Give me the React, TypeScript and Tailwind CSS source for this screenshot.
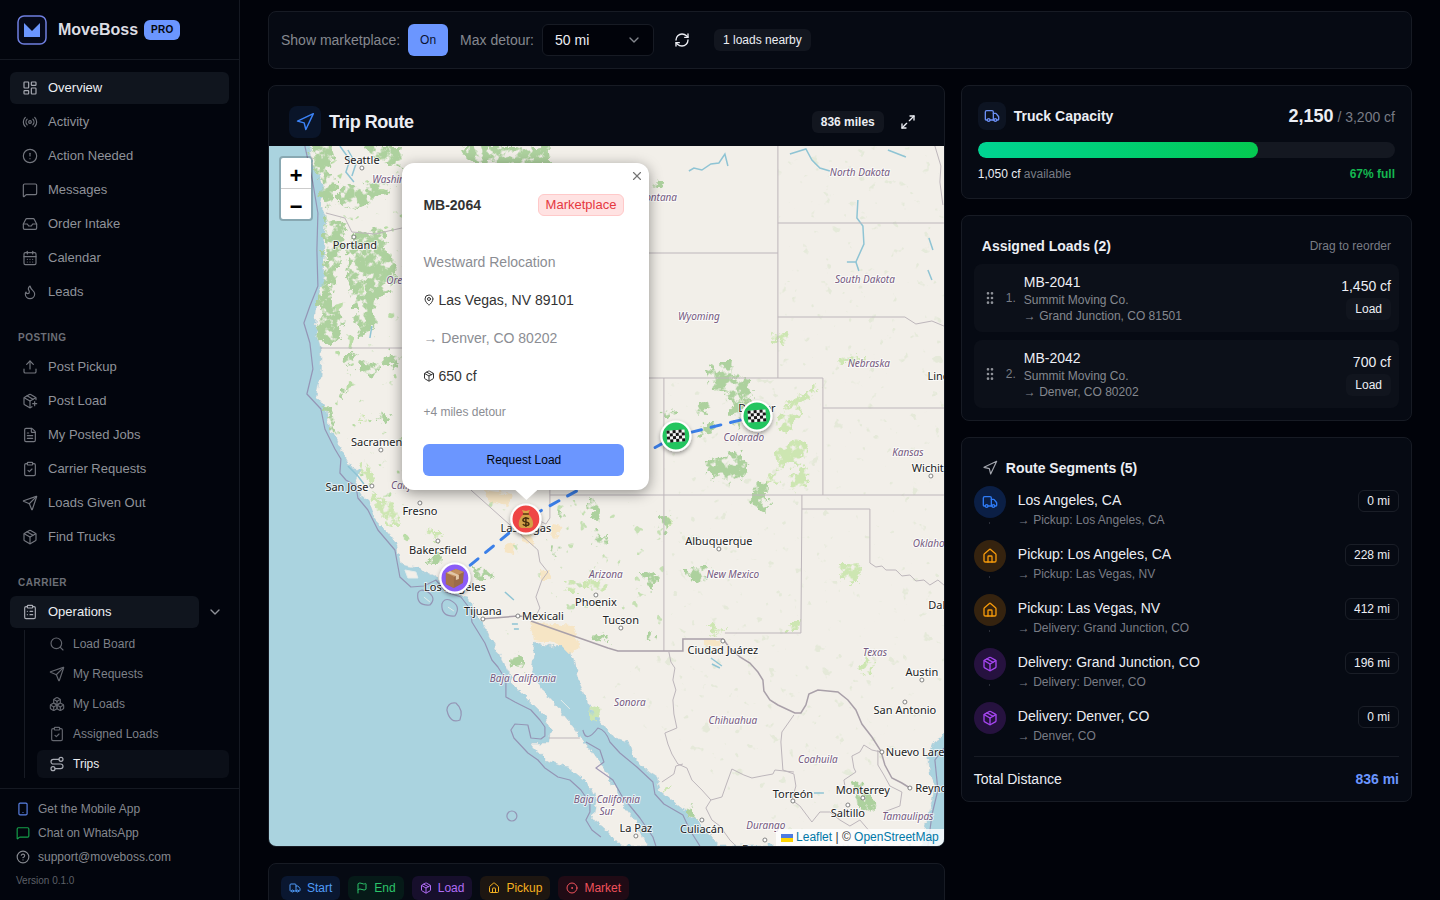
import React, { useState } from 'react';
import {
  LayoutDashboard, Radio, CircleAlert, MessageSquare, Inbox, CalendarDays, Flame, Upload, PackagePlus,
  FileText, ClipboardCheck, Send, Package, ClipboardList, ChevronDown, Search, Boxes, Route, Smartphone,
  CircleHelp, RefreshCw, Navigation, Maximize2, Truck, GripVertical, House, Flag, CircleDot, MapPin, X,
} from 'lucide-react';

const MAIN_LINKS = [
  { label: 'Overview', icon: LayoutDashboard, active: true },
  { label: 'Activity', icon: Radio },
  { label: 'Action Needed', icon: CircleAlert },
  { label: 'Messages', icon: MessageSquare },
  { label: 'Order Intake', icon: Inbox },
  { label: 'Calendar', icon: CalendarDays },
  { label: 'Leads', icon: Flame },
];

const POSTING_LINKS = [
  { label: 'Post Pickup', icon: Upload },
  { label: 'Post Load', icon: PackagePlus },
  { label: 'My Posted Jobs', icon: FileText },
  { label: 'Carrier Requests', icon: ClipboardCheck },
  { label: 'Loads Given Out', icon: Send },
  { label: 'Find Trucks', icon: Package },
];

const OPERATIONS_LINKS = [
  { label: 'Load Board', icon: Search },
  { label: 'My Requests', icon: Send },
  { label: 'My Loads', icon: Boxes },
  { label: 'Assigned Loads', icon: ClipboardCheck },
  { label: 'Trips', icon: Route, active: true },
];

const LOADS = [
  { id: 'MB-2041', company: 'Summit Moving Co.', to: 'Grand Junction, CO 81501', volume: '1,450 cf' },
  { id: 'MB-2042', company: 'Summit Moving Co.', to: 'Denver, CO 80202', volume: '700 cf' },
];

const SEGMENTS = [
  { from: 'Los Angeles, CA', to: 'Pickup: Los Angeles, CA', miles: 0, icon: Truck, style: 'bg-[#0b1f45] text-[#2f7bf5]' },
  { from: 'Pickup: Los Angeles, CA', to: 'Pickup: Las Vegas, NV', miles: 228, icon: House, style: 'bg-[#35230f] text-[#f59a0b]' },
  { from: 'Pickup: Las Vegas, NV', to: 'Delivery: Grand Junction, CO', miles: 412, icon: House, style: 'bg-[#35230f] text-[#f59a0b]' },
  { from: 'Delivery: Grand Junction, CO', to: 'Delivery: Denver, CO', miles: 196, icon: Package, style: 'bg-[#26123f] text-[#a546f0]' },
  { from: 'Delivery: Denver, CO', to: 'Denver, CO', miles: 0, icon: Package, style: 'bg-[#26123f] text-[#a546f0]' },
];

const LEGEND = [
  { label: 'Start', icon: Truck, style: 'bg-[#0a1730] text-[#4f9bf8]' },
  { label: 'End', icon: Flag, style: 'bg-[#061a18] text-[#2cc46a]' },
  { label: 'Load', icon: Package, style: 'bg-[#170f2c] text-[#b06cf5]' },
  { label: 'Pickup', icon: House, style: 'bg-[#1d1611] text-[#f5b01f]' },
  { label: 'Market', icon: CircleDot, style: 'bg-[#200b15] text-[#f0525c]' },
];

const CARD = 'rounded-lg border border-[#171b24] bg-[#060a13]';

// map labels: [text, x, y]
const CITIES: [string, number, number][] = [
  ['Seattle', 362, 160], ['Portland', 355, 245], ['Sacramento', 382, 442], ['San Jose', 347, 487],
  ['Fresno', 420, 511], ['Bakersfield', 438, 550], ['Las Vegas', 526, 528], ['Los Angeles', 455, 587],
  ['Tijuana', 483, 611], ['Mexicali', 543, 616], ['Phoenix', 596, 602], ['Tucson', 621, 620],
  ['Albuquerque', 719, 541], ['Ciudad Juárez', 723, 650], ['Denver', 757, 408], ['Wichita', 931, 468],
  ['Lincoln', 946, 376], ['Dallas', 944, 605], ['Austin', 922, 672], ['San Antonio', 905, 710],
  ['Nuevo Laredo', 922, 752], ['Monterrey', 863, 790], ['Reynosa', 937, 788], ['Torreón', 793, 794],
  ['Saltillo', 848, 813], ['Culiacán', 702, 829], ['La Paz', 636, 828], ['Durango', 765, 849],
];

const STATES: [string, number, number][] = [
  ['Washington', 399, 179], ['Oregon', 403, 280], ['Montana', 657, 197], ['North Dakota', 860, 172],
  ['South Dakota', 865, 279], ['Wyoming', 699, 316], ['Nebraska', 869, 363], ['Kansas', 908, 452],
  ['Colorado', 744, 437], ['California', 413, 485], ['Arizona', 606, 574], ['New Mexico', 733, 574],
  ['Oklahoma', 936, 543], ['Texas', 875, 652], ['Baja California', 523, 678], ['Sonora', 630, 702],
  ['Chihuahua', 733, 720], ['Coahuila', 818, 759], ['Durango', 766, 825], ['Tamaulipas', 908, 816],
  ['Baja California', 607, 799], ['Sur', 607, 811],
];

const TOWNS = [
  [362, 168], [354, 237], [381, 450], [372, 486], [420, 503], [438, 541], [483, 619], [518, 616], [596, 595],
  [621, 628], [719, 549], [723, 641], [931, 476], [922, 680], [905, 702], [882, 752], [863, 798], [910, 788],
  [793, 801], [848, 805], [702, 820], [636, 836], [765, 840],
];

const WOODS = [
  'M309 146H330L334 158 326 170 336 178 334 200 326 212 319 180Z',
  'M340 184L360 186 378 180 392 186 390 196 372 198 356 210 340 206Z',
  'M370 146H402V168L384 164 366 152Z',
  'M324 216L346 226 340 262 330 300 343 318 338 345 319 342 318 298 326 262Z',
  'M352 232L386 230 386 252 398 262 394 290 376 300 374 330 358 336 354 300 346 280Z',
  'M346 354L354 354 350 366 346 364Z M362 360L378 366 374 376 360 372Z M386 350L398 356 396 368 384 364Z',
  'M322 404L330 408 340 434 332 432Z M380 410L390 416 388 424 380 420Z M340 388L346 390 344 398 338 396Z',
  'M705 368L718 372 722 362 733 362 732 376 750 380 752 404 734 416 726 394 708 386Z',
  'M696 406L708 402 710 412 696 416Z M704 424L712 424 710 434 700 438Z M704 462L742 450 748 474 738 482 712 476Z',
  'M664 412L674 410 672 418 664 418Z M736 414L742 420 738 428 732 424Z',
  'M752 482H768V512L754 508Z M660 516H670V534H660Z M688 568L708 568 704 582 688 580Z M640 572L656 572 656 590 646 588Z',
  'M588 496L598 502 600 522 590 515Z M594 534L610 536 608 546 592 546Z M560 508L566 510 564 524 558 520Z M554 544L558 546 556 558 552 554Z',
  'M646 630H654V640H646Z M596 634L606 636 604 642 594 640Z M604 638L610 638 608 644Z',
  'M474 568L496 570 494 578 474 576Z M428 556H442V564H428Z M512 652L520 656 524 672 514 664Z',
  'M460 146H550V164H470Z M651 183L662 180 660 188 651 188Z',
  'M854 778L866 786 878 810 868 812 856 800Z M688 804L694 812 694 820 688 816Z',
];

const MEADOWS = [
  'M372 496L384 498 398 512 402 526 392 526 378 512Z M430 532L444 532 440 540 430 540Z M362 462L374 476 370 482 360 470Z',
  'M774 333L788 334 786 346 774 344Z M838 358L866 357 864 364 838 364Z M786 404L818 384 820 388 800 406Z',
  'M837 562L860 562 860 582 844 582Z M858 672L866 652 874 664 870 674Z M787 624H800V632H787Z M708 626L722 626 720 636Z',
  'M588 708L600 704 598 720 588 720Z M566 580L576 580 576 592 568 592Z M582 580L606 578 602 590 586 588Z',
  'M778 414L796 402 804 410 792 430 778 428Z M776 452L796 436 808 448 800 464 778 468Z M766 478L778 472 780 482 768 486Z M788 476L810 466 808 486 790 490Z',
  'M660 516L672 518 670 532 662 534Z M360 410L366 420 362 424Z M662 784L672 784 664 792Z',
];

const SANDS = [
  'M530 622L574 626 580 648 570 654 560 644 534 640Z M504 544L516 542 514 554 504 552Z M484 490L512 494 508 506 490 502Z',
  'M540 568L552 570 550 580 542 580Z M552 524L562 526 556 540 550 534Z M705 640H720V646H705Z M520 532L532 534 534 546 524 542Z',
];

const LAND =
  'M310 146L313 166 320 176 323 189 321 204 326 218 324 246 325 279 318 296 315 326 320 346 321 359 320 379 316 396 326 409 330 429 341 449 350 466 360 471 355 483 363 496 368 500 375 520 387 532 396 543 401 565 418 568 435 576 448 592 468 597 478 617 488 633 498 653 505 667 515 687 528 700 545 717 551 730 548 744 530 744 545 760 568 767 588 783 596 800 593 820 608 832 620 846H648L643 837 635 820 620 800 610 777 605 770 593 753 581 737 568 720 558 707 545 693 532 672 535 642 551 647 561 645 573 657 578 680 588 702 600 720 613 737 628 742 632 753 643 767 658 777 660 790 680 807 697 820 710 833 717 846H922L926 823 932 803 935 783 929 772 928 757 934 742 950 733V140H309Z';

const STATE_LINES = [
  'M326 213L345 218 352 232 375 234 402 228', 'M320 348H402', 'M649 253H778', 'M778 146V378', 'M778 223H944',
  'M778 317H905L916 324 932 321 944 326', 'M649 378H823V495', 'M823 408H944', 'M664 378V651', 'M550 495H944',
  'M802 495V509H870V563L876 567 882 566 886 570 896 570 902 576 910 575 916 581 924 580 930 585 938 580 944 585',
  'M802 509L801 633H725', 'M471 490L538 550 540 562 548 572 542 580 536 597 540 608 536 616', 'M550 490V518L546 524 538 520', 'M549 738H580',
  'M669 652L671 662 675 668 673 680 676 690 673 700 674 714 677 728 665 733 668 744 672 754 678 764 687 768 692 780 702 790 711 800 706 808 712 820 720 826 730 840 736 846',
  'M794 715L782 732 781 742 783 770 794 774 796 786 792 800 800 806 812 822', 'M711 800L722 797 728 780 732 769 744 775 752 778 762 776 773 774 775 770 794 772',
  'M683 764L676 766 674 774 662 782', 'M881 752L872 750 864 745 860 752 852 756 854 768 856 772 844 780 846 792', 'M878 750L878 765 884 775 890 786 902 792 900 806 884 812',
  'M812 822L820 812 830 812 840 820 850 826 860 820 872 834', 'M935 146L941 166 940 182 943 205',
];

const SEA_LINES = [
  'M305 146L313 183 318 213 317 250 318 286 310 306 304 323 310 343 313 369 307 394 321 409 325 429 335 449 341 459 340 473 346 480 356 486 358 498 368 510 378 530 395 550 400 577 411 587 424 586 436 580 446 592 461 597 471 610 472 622 485 643 492 660 498 667 506 680 506 697 515 702 531 710 540 720 545 727 545 736 541 739 531 738 528 725 515 724 511 730 514 738 528 753 538 760 545 768 558 777 570 780 581 790 590 803 590 812 586 820 592 830 601 837',
  'M583 730Q586 744 598 728Q606 730 610 742L620 753 637 767 653 782 655 794 664 804 683 815 690 830 700 846',
  'M586 742L600 750 604 762 596 768 613 780 622 796 640 818 653 837 656 846',
  'M418 593Q416 606 430 605Q437 598 428 592Q420 588 418 593Z',
  'M442 604Q441 617 455 616Q462 606 450 600Q444 598 442 604Z',
  'M447 710Q448 702 456 703Q464 710 460 720Q450 724 447 710Z',
  'M507 816a5 5 0 1 0 10 0a5 5 0 1 0 -10 0Z',
  'M944 748L935 760 938 790 932 815 928 846',
];

const LAKES = [
  'M689 171L694 168 702 170 711 164 719 163 725 154 728 166', 'M790 154L806 149 812 160 820 168 830 171',
  'M858 200L857 218 863 226 864 244 856 262 859 271M847 262L857 262', 'M888 150L906 157',
  'M340 146L350 160 346 172 354 182', 'M348 150L356 164 352 176', 'M505 592L514 600', 'M348 466L358 476 364 484', 'M372 326L370 338',
  'M929 238L933 250M928 270L932 280', 'M711 658L722 666M712 664L720 668', 'M814 793H824', 'M512 624H518M514 629H519',
];

function BoxGlyph() {
  return (
    <g>
      <path d="M-9 -5L1 -9 9 -6 8 5 -1 10 -9 6Z" fill="#9b6b48" />
      <path d="M-9 -5L1 -9 9 -6 -1 -1Z" fill="#c3905f" />
      <path d="M-9 -5L-1 -1V10L-9 6Z" fill="#a8754a" />
      <path d="M-5 -7L4 -3V1L1 2V-2L-8 -5Z" fill="#e2c7a6" />
    </g>
  );
}

function MoneyGlyph() {
  return (
    <g>
      <path d="M-4 -9L0 -8 4 -9 2 -5H-2Z" fill="#d9a848" />
      <path d="M-2 -5H2C8 -1 9 9 4 9H-4C-9 9 -8 -1 -2 -5Z" fill="#d3a148" />
      <path d="M-3 -5H3" stroke="#7a4b1d" strokeWidth="2" />
      <path d="M3 0C1 -2 -3 -1 -3 1C-3 4 3 2 3 5C3 7 -2 7 -3 5M0 -2V8" fill="none" stroke="#4a300f" strokeWidth="1.5" />
    </g>
  );
}

function FlagGlyph() {
  return (
    <g transform="rotate(-4)">
      <rect x="-9" y="-6" width="18" height="12" fill="#f4f4f4" />
      {Array.from({ length: 24 }, (_, i) => i).map((i) => {
        const col = i % 6;
        const row = Math.floor(i / 6);
        return (col + row) % 2 === 0 ? (
          <rect key={i} x={-9 + col * 3} y={-6 + row * 3} width="3" height="3" fill="#161616" />
        ) : null;
      })}
    </g>
  );
}

const MARKERS = [
  { x: 455, y: 578, color: '#8b5cf6', glyph: BoxGlyph },
  { x: 526, y: 519, color: '#ef4444', glyph: MoneyGlyph },
  { x: 676, y: 436, color: '#22c55e', glyph: FlagGlyph },
  { x: 757, y: 416, color: '#22c55e', glyph: FlagGlyph },
];

function RouteMap() {
  return (
    <svg
      viewBox="269 146 675 700"
      preserveAspectRatio="xMidYMid slice"
      className="block h-full w-full font-['Noto_Sans',sans-serif]"
      role="img"
      aria-label="Trip route map"
    >
      <defs>
        <filter id="rough" x="-5%" y="-5%" width="110%" height="110%" colorInterpolationFilters="sRGB">
          <feTurbulence type="fractalNoise" baseFrequency="0.15" numOctaves="3" seed="4" />
          <feDisplacementMap in="SourceGraphic" scale="7" xChannelSelector="R" yChannelSelector="G" />
        </filter>
        <filter id="patchy" x="-10%" y="-10%" width="120%" height="120%" colorInterpolationFilters="sRGB">
          <feTurbulence type="fractalNoise" baseFrequency="0.12" numOctaves="4" seed="9" result="noise" />
          <feColorMatrix in="noise" values="0 0 0 0 0  0 0 0 0 0  0 0 0 0 0  7 0 0 0 -2.5" result="mask" />
          <feDisplacementMap in="SourceGraphic" in2="noise" scale="16" xChannelSelector="G" yChannelSelector="B" result="shape" />
          <feComposite in="shape" in2="mask" operator="in" />
        </filter>
        <filter id="specks" x="0" y="0" width="100%" height="100%" colorInterpolationFilters="sRGB">
          <feTurbulence type="fractalNoise" baseFrequency="0.09" numOctaves="3" seed="21" />
          <feColorMatrix values="0 0 0 0 0  0 0 0 0 0  0 0 0 0 0  14 0 0 0 -9.8" result="noise" />
          <feComposite in="SourceGraphic" in2="noise" operator="in" />
        </filter>
        <filter id="drop" x="-30%" y="-30%" width="160%" height="170%">
          <feDropShadow dx="0" dy="2" stdDeviation="2" floodOpacity="0.4" />
        </filter>
      </defs>

      <rect x="200" y="100" width="860" height="800" fill="#aad3df" />
      <path d={LAND} fill="#f2efe9" stroke="#b5cfd8" strokeWidth="0.6" filter="url(#rough)" />
      <path d="M405 570L416 572 418 578 408 578Z M424 597L430 602 M448 607L454 611 M561 700L570 709" fill="#f2efe9" stroke="#e4ecea" />

      {SANDS.map((d) => (
        <path key={d} d={d} fill="#f7e3bd" filter="url(#rough)" opacity="0.8" />
      ))}
      <path d="M324 160H402V500L520 640 490 630 450 570 390 530 330 420Z" fill="#b9dca6" filter="url(#specks)" />
      <path d="M480 500H664V640L560 610Z" fill="#c6e0b4" filter="url(#specks)" />
      <path d="M664 378H778V146H944V700L800 846 600 700 664 640Z" fill="#dde6d0" filter="url(#specks)" opacity="0.6" />
      {MEADOWS.map((d) => (
        <path key={d} d={d} fill="#cde6b2" filter="url(#patchy)" />
      ))}
      {WOODS.map((d) => (
        <path key={d} d={d} fill="#add19e" filter="url(#patchy)" />
      ))}

      <g fill="none" stroke="#8fc4d4" strokeWidth="1.5">
        {LAKES.map((d) => (
          <path key={d} d={d} />
        ))}
      </g>
      <g fill="none" stroke="#bdb6bb">
        {STATE_LINES.map((d) => (
          <path key={d} d={d} />
        ))}
      </g>
      <g fill="none" stroke="#8f86ab" strokeWidth="1.2" strokeLinejoin="round" opacity="0.8">
        {SEA_LINES.map((d) => (
          <path key={d} d={d} />
        ))}
      </g>
      <path
        d="M481 619L518 616 531 617M531 621L608 648 618 651H683V639H723L730 648 740 657 750 663 758 672 763 680 764 691 770 700 778 705 795 713 801 713 806 705 809 694 818 690 838 692 848 700 856 710 862 724 872 737 881 751 885 765 892 778 902 783 910 788"
        fill="none"
        stroke="#a9a0a9"
        strokeWidth="1.5"
      />

      {TOWNS.map(([x, y]) => (
        <circle key={`${x}-${y}`} cx={x} cy={y} r="2" fill="#fff" stroke="#666" strokeWidth="0.8" />
      ))}
      <g textAnchor="middle" stroke="#fff" strokeWidth="2" strokeOpacity="0.7" strokeLinejoin="round" className="[paint-order:stroke]">
        {STATES.map(([name, x, y]) => (
          <text key={`${name}-${x}`} x={x} y={y + 4} fill="#75597f" className="text-[10px] italic">{name}</text>
        ))}
        {CITIES.map(([name, x, y]) => (
          <text key={`${name}-${x}`} x={x} y={y + 4} fill="#222" className="text-[11px]">{name}</text>
        ))}
      </g>

      <path
        d="M455 578L526 519 676 436 757 416"
        fill="none"
        stroke="#3b7fe8"
        strokeWidth="3"
        strokeLinecap="round"
        strokeDasharray="10 10"
      />
      {MARKERS.map(({ x, y, color, glyph: Glyph }) => (
        <g key={x} transform={`translate(${x} ${y})`}>
          <circle r="14.5" fill={color} stroke="#fff" strokeWidth="2.2" filter="url(#drop)" />
          <Glyph />
        </g>
      ))}
    </svg>
  );
}

function LoadPopup({ onClose }: { onClose: () => void }) {
  return (
    <div className="absolute left-[calc(50%-204px)] top-[17px] w-[247px] rounded-xl bg-white pt-[31px] pr-[25px] pb-[14px] pl-[21px] text-sm text-[#333] shadow-[0_3px_14px_rgba(0,0,0,0.4)]">
      <button type="button" aria-label="Close popup" onClick={onClose} className="absolute top-0 right-0 flex h-[26px] w-6 items-center justify-center text-[#757575]">
        <X className="h-3.5 w-3.5" strokeWidth={2} />
      </button>
      <div className="flex items-center justify-between">
        <span className="font-bold">MB-2064</span>
        <span className="rounded-md border border-[#ffc9c9] bg-[#ffe2e2] px-[7px] text-[13px] leading-5 text-[#e5383f]">Marketplace</span>
      </div>
      <p className="mt-9 text-[#8b8d93]">Westward Relocation</p>
      <p className="mt-[18px] flex items-center gap-[3px]"><MapPin className="h-3 w-3" />Las Vegas, NV 89101</p>
      <p className="mt-[18px] text-[#8b8d93]">→ Denver, CO 80202</p>
      <p className="mt-[18px] flex items-center gap-[3px]"><Package className="h-3 w-3" />650 cf</p>
      <p className="mt-[18px] text-xs text-[#8b8d93]">+4 miles detour</p>
      <button type="button" className="mt-6 h-8 w-full rounded-md bg-[#6b96ff] text-xs font-medium text-[#05070d]">Request Load</button>
      <div className="absolute top-full left-[113px] h-2.5 w-[22px] bg-white [clip-path:polygon(0_0,100%_0,50%_100%)]" />
    </div>
  );
}

function NavLink({ label, icon: Icon, active }: { label: string; icon: React.ElementType; active?: boolean }) {
  return (
    <a
      href="#"
      className={`flex h-8 items-center gap-2.5 rounded-md px-3 text-[13px] ${active ? 'bg-[#10151e] text-[#eceef3]' : 'text-[#8f9299]'}`}
    >
      <Icon className={`h-4 w-4 ${active ? 'text-[#a9acb4]' : 'text-[#74777f]'}`} strokeWidth={1.75} />
      {label}
    </a>
  );
}

function Sidebar() {
  const [open, setOpen] = useState(true);

  return (
    <aside className="flex w-60 shrink-0 flex-col border-r border-[#151922] bg-[#02050d]">
      <div className="flex h-[60px] items-center border-b border-[#151922] px-[17px]">
        <svg viewBox="0 0 30 30" className="h-[30px] w-[30px]" aria-hidden="true">
          <rect x="1" y="1" width="28" height="28" rx="6" fill="#05091a" stroke="#6f7fdf" strokeWidth="1.5" />
          <path d="M7 8L15 16 23 8V22H7Z" fill="#6b96ff" />
        </svg>
        <span className="ml-[11px] text-base font-bold text-[#dcdde3]">MoveBoss</span>
        <span className="ml-1.5 rounded-md bg-[#6b96ff] px-[7px] text-[10px] leading-5 font-bold tracking-wide text-[#05070d]">PRO</span>
      </div>

      <nav className="flex-1 px-2.5 pt-3">
        <div className="space-y-0.5">
          {MAIN_LINKS.map((link) => <NavLink key={link.label} {...link} />)}
        </div>
        <h2 className="mt-[22px] mb-1.5 px-2 text-[10px] leading-[15px] font-bold tracking-wider text-[#6c6f77]">POSTING</h2>
        <div className="space-y-0.5">
          {POSTING_LINKS.map((link) => <NavLink key={link.label} {...link} />)}
        </div>
        <h2 className="mt-[22px] mb-1.5 px-2 text-[10px] leading-[15px] font-bold tracking-wider text-[#6c6f77]">CARRIER</h2>
        <div className="flex items-center">
          <div className="flex-1"><NavLink label="Operations" icon={ClipboardList} active /></div>
          <button type="button" aria-label="Toggle operations" onClick={() => setOpen(!open)} className="flex h-7 w-[30px] items-center justify-center pl-0.5 text-[#8f9299]">
            <ChevronDown className="h-4 w-4" />
          </button>
        </div>
        {open && (
          <div className="mt-0.5 ml-3.5 space-y-0.5 border-l border-[#171b24] pl-3">
            {OPERATIONS_LINKS.map(({ label, icon: Icon, active }) => (
              <a
                key={label}
                href="#"
                className={`flex h-7 items-center gap-2 rounded-md px-3 text-xs ${active ? 'bg-[#0b0f18] text-[#eceef3]' : 'text-[#7d8088]'}`}
              >
                <Icon className={`h-4 w-4 ${active ? 'text-[#a9acb4]' : 'text-[#63666e]'}`} strokeWidth={1.75} />
                {label}
              </a>
            ))}
          </div>
        )}
      </nav>

      <div className="border-t border-[#151922] px-4 pt-2 pb-[11px] text-xs text-[#85888f]">
        <a href="#" className="flex h-6 items-center gap-2"><Smartphone className="h-3.5 w-3.5 text-[#5b82e6]" />Get the Mobile App</a>
        <a href="#" className="flex h-6 items-center gap-2"><MessageSquare className="h-3.5 w-3.5 text-[#15a04a]" />Chat on WhatsApp</a>
        <a href="#" className="flex h-6 items-center gap-2"><CircleHelp className="h-3.5 w-3.5" />support@moveboss.com</a>
        <p className="pt-1 text-[10px] leading-4 text-[#5d6068]">Version 0.1.0</p>
      </div>
    </aside>
  );
}

function TripRoute() {
  const [popupOpen, setPopupOpen] = useState(true);

  return (
    <section className={`${CARD} overflow-hidden`}>
      <div className="flex items-center px-5 pt-5 pb-2">
        <div className="flex h-8 w-8 items-center justify-center rounded-lg bg-[#0a1529] text-[#3b82f6]">
          <Navigation className="h-5 w-5" strokeWidth={1.75} />
        </div>
        <h1 className="ml-2 text-lg leading-7 font-bold tracking-tight">Trip Route</h1>
        <span className="ml-auto rounded-md bg-[#12161f] px-[9px] text-xs leading-[22px] font-bold">836 miles</span>
        <button type="button" aria-label="Expand map" className="ml-2 flex h-8 w-8 items-center justify-center">
          <Maximize2 className="h-4 w-4" />
        </button>
      </div>
      <div className="relative h-[700px]">
        <RouteMap />
        <div className="absolute top-2.5 left-2.5 flex w-[34px] flex-col rounded-sm border-2 border-black/20 bg-white bg-clip-padding">
          <button type="button" aria-label="Zoom in" className="flex h-[31px] items-center justify-center border-b border-[#ccc] pt-2 font-mono text-[22px] font-bold text-black">+</button>
          <button type="button" aria-label="Zoom out" className="flex h-[30px] items-center justify-center pt-2 font-mono text-[22px] font-bold text-black">−</button>
        </div>
        {popupOpen && <LoadPopup onClose={() => setPopupOpen(false)} />}
        <div className="absolute right-0 bottom-0 flex items-center bg-white/80 px-[5px] text-xs leading-[17px] text-[#333]">
          <svg viewBox="0 0 12 8" className="mr-[3px] h-2 w-3" aria-hidden="true">
            <path fill="#4c7be1" d="M0 0h12v4H0z" />
            <path fill="#ffd500" d="M0 4h12v4H0z" />
          </svg>
          <a href="#" className="text-[#0078a8]">Leaflet</a>
          <span className="whitespace-pre"> | © </span>
          <a href="#" className="text-[#0078a8]">OpenStreetMap</a>
        </div>
      </div>
    </section>
  );
}

export default function App() {
  const [showMarketplace, setShowMarketplace] = useState(true);
  const used = 2150;
  const capacity = 3200;

  return (
    <div className="flex h-screen overflow-hidden bg-[#01030a] font-['Liberation_Sans',Arial,sans-serif] text-[#eceef4]">
      <Sidebar />
      <main className="min-w-0 flex-1 overflow-hidden px-7 pt-[11px]">
        <div className={`${CARD} flex items-center p-3 text-sm`}>
          <span className="text-[#85888f]">Show marketplace:</span>
          <button
            type="button"
            onClick={() => setShowMarketplace(!showMarketplace)}
            className="ml-2 h-8 rounded-md bg-[#6b96ff] px-3 text-xs text-[#0a1230]"
          >
            {showMarketplace ? 'On' : 'Off'}
          </button>
          <label htmlFor="detour" className="ml-3 text-[#85888f]">Max detour:</label>
          <div className="relative ml-2">
            <select id="detour" defaultValue="50" className="h-8 w-28 appearance-none rounded-md border border-[#171b24] bg-[#01030a] px-3">
              <option value="25">25 mi</option>
              <option value="50">50 mi</option>
              <option value="100">100 mi</option>
            </select>
            <ChevronDown className="pointer-events-none absolute top-2 right-3 h-4 w-4 text-[#85888f]" />
          </div>
          <button type="button" aria-label="Refresh" className="ml-3 flex h-8 w-8 items-center justify-center"><RefreshCw className="h-4 w-4" /></button>
          <span className="ml-4 rounded-md bg-[#12161f] px-[9px] text-xs leading-[22px]">1 loads nearby</span>
        </div>

        <div className="mt-4 grid grid-cols-[3fr_2fr] items-start gap-4">
          <div className="space-y-4">
            <TripRoute />
            <div className={`${CARD} flex gap-2 p-3`}>
              {LEGEND.map(({ label, icon: Icon, style }) => (
                <span key={label} className={`flex h-6 items-center gap-1.5 rounded-md px-2 text-xs ${style}`}>
                  <Icon className="h-3 w-3" />
                  {label}
                </span>
              ))}
            </div>
          </div>

          <div className="space-y-4">
            <section className={`${CARD} p-4`}>
              <div className="flex h-7 items-center">
                <div className="flex h-7 w-7 items-center justify-center rounded-lg bg-[#0d1422] text-[#6b8ff5]"><Truck className="h-4 w-4" /></div>
                <h2 className="ml-2 text-sm font-bold">Truck Capacity</h2>
                <p className="ml-auto text-sm text-[#797c85]">
                  <span className="text-lg leading-7 font-bold text-[#eceef4]">2,150</span> / 3,200 cf
                </p>
              </div>
              <div className="mt-3 h-4 overflow-hidden rounded-full bg-[#141821]">
                <div
                  className="h-full rounded-full bg-linear-to-r from-[#00d492] to-[#05c950]"
                  style={{ width: `${(used / capacity) * 100}%` }}
                />
              </div>
              <div className="mt-2 flex justify-between text-xs">
                <p>1,050 cf <span className="text-[#797c85]">available</span></p>
                <p className="font-bold text-[#14b850]">67% full</p>
              </div>
            </section>

            <section className={`${CARD} px-3 pb-3`}>
              <div className="flex items-center justify-between px-2 pt-5 pb-2">
                <h2 className="text-sm font-bold">Assigned Loads (2)</h2>
                <span className="text-xs text-[#797c85]">Drag to reorder</span>
              </div>
              <ol className="space-y-2">
                {LOADS.map((load, i) => (
                  <li key={load.id} className="flex items-center gap-2 rounded-lg bg-[#0c1019] p-2 text-xs">
                    <GripVertical className="h-4 w-4 text-[#8f9299]" />
                    <span className="text-[#797c85]">{i + 1}.</span>
                    <div className="flex-1 text-[#85888f]">
                      <p className="text-sm text-[#eceef4]">{load.id}</p>
                      <p>{load.company}</p>
                      <p>→ {load.to}</p>
                    </div>
                    <div className="flex flex-col items-end gap-0.5">
                      <p className="text-sm">{load.volume}</p>
                      <span className="rounded-md bg-[#11151e] px-[9px] leading-[22px]">Load</span>
                    </div>
                  </li>
                ))}
              </ol>
            </section>

            <section className={`${CARD} px-3 pb-3`}>
              <div className="flex items-center gap-2 px-2 pt-5 pb-2">
                <Navigation className="h-4 w-4 text-[#a3a6ae]" strokeWidth={1.75} />
                <h2 className="text-sm font-bold">Route Segments (5)</h2>
              </div>
              <ul className="space-y-3">
                {SEGMENTS.map(({ from, to, miles, icon: Icon, style }, i) => (
                  <li key={from} className="flex gap-3">
                    <div className="flex flex-col items-center">
                      <div className={`flex h-8 w-8 items-center justify-center rounded-full ${style}`}><Icon className="h-4 w-4" /></div>
                      {i < SEGMENTS.length - 1 && <div className="my-1 w-px flex-1 bg-[#2a2e38]" />}
                    </div>
                    <div className="flex-1 pt-1">
                      <p className="text-sm">{from}</p>
                      <p className="mt-0.5 text-xs text-[#797c85]">→ {to}</p>
                    </div>
                    <span className="mt-1 self-start rounded-md border border-[#1a1e27] px-2 text-xs leading-5">{miles} mi</span>
                  </li>
                ))}
              </ul>
              <div className="mt-3 flex justify-between border-t border-[#171b24] pt-3 text-sm">
                <span>Total Distance</span>
                <span className="font-bold text-[#6b96ff]">836 mi</span>
              </div>
            </section>
          </div>
        </div>
      </main>
    </div>
  );
}
